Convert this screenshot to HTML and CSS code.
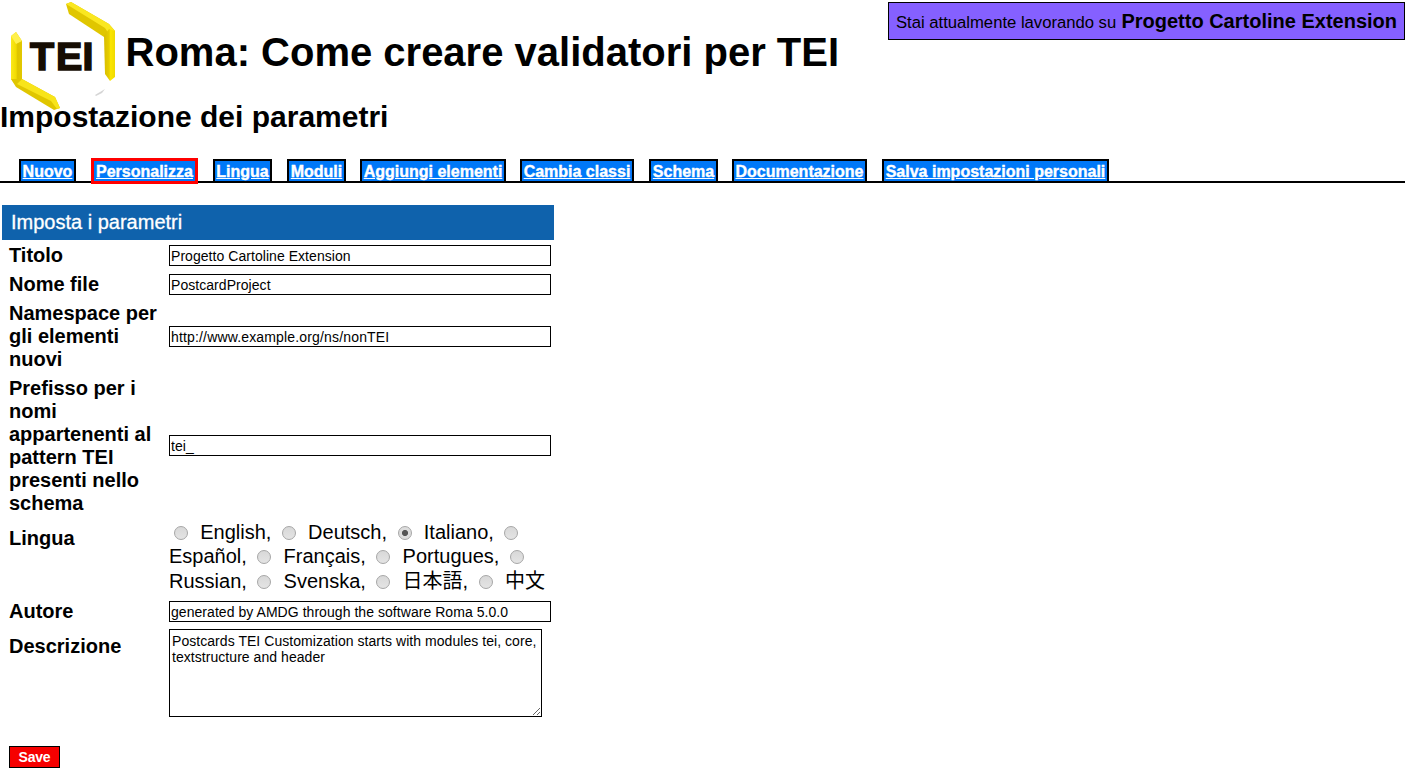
FILE: index.html
```html
<!DOCTYPE html>
<html lang="it">
<head>
<meta charset="utf-8">
<title>Roma: Come creare validatori per TEI</title>
<link rel="stylesheet" href="styles.css">
</head>
<body>
<header class="banner">
  <svg class="logo" width="120" height="112" viewBox="0 0 120 112" aria-label="TEI">
    <defs>
      <linearGradient id="gold" x1="0" x2="1"><stop offset="0" stop-color="#d8bd00"/><stop offset=".45" stop-color="#e6cd00"/><stop offset=".6" stop-color="#fbe600"/><stop offset="1" stop-color="#f0da00"/></linearGradient>
      <linearGradient id="gold-left" x1="0" x2="1"><stop offset="0" stop-color="#fbe81c"/><stop offset=".45" stop-color="#f2dc00"/><stop offset=".6" stop-color="#dec400"/><stop offset="1" stop-color="#e2c800"/></linearGradient>
    </defs>
    <path fill="#e0c600" d="M66 4L71 2L109 24L115 31L104 37L69 14Z"/>
    <path fill="#fae720" d="M66 4L71 2L109 24L115 31L109 34L105 28L71 7Z"/>
    <path fill="url(#gold)" d="M104 36L109 29L115 31L115 77L110 81L105 74Z"/>
    <path fill="url(#gold-left)" d="M11 36L16 32L22 41L22 80L17 87L11 79Z"/>
    <path fill="#fff04d" d="M11 36L16 32L22 41L16 44Z"/>
    <path fill="#e0c600" d="M11 79L22 79L55 97L60 108L54 110L16 87Z"/>
    <path fill="#f8e41a" d="M22 79L55 97L60 108L57 109L51 101L17 84Z"/>
    <path fill="#d5d5d5" d="M95 95L105 89L102 93L96 96Z"/>
    <text class="logo-text" x="30 56 82.5" y="70">TEI</text>
  </svg>
  <h1 class="title">Roma: Come creare validatori per TEI</h1>
  <div class="status"><span class="working">Stai attualmente lavorando su</span><strong class="project">Progetto Cartoline Extension</strong></div>
</header>
<h2 class="subtitle">Impostazione dei parametri</h2>
<nav class="tabs">
  <a class="tab w57" href="#">Nuovo</a>
  <a class="tab active" href="#">Personalizza</a>
  <a class="tab w59" href="#">Lingua</a>
  <a class="tab w59" href="#">Moduli</a>
  <a class="tab w146" href="#">Aggiungi elementi</a>
  <a class="tab w114" href="#">Cambia classi</a>
  <a class="tab w69" href="#">Schema</a>
  <a class="tab w135" href="#">Documentazione</a>
  <a class="tab w227" href="#">Salva impostazioni personali</a>
</nav>
<form class="params">
  <div class="heading">Imposta i parametri</div>
  <div class="row"><label class="name">Titolo</label><input class="field" value="Progetto Cartoline Extension"></div>
  <div class="row"><label class="name">Nome file</label><input class="field" value="PostcardProject"></div>
  <div class="row"><label class="name">Namespace per<br>gli elementi<br>nuovi</label><input class="field url" value="http://www.example.org/ns/nonTEI"></div>
  <div class="row prefix-row"><label class="name">Prefisso per i<br>nomi<br>appartenenti al<br>pattern TEI<br>presenti nello<br>schema</label><input class="field" value="tei_"></div>
  <div class="row top langs-row"><label class="name">Lingua</label>
    <div class="langs">
      <div><i class="radio"></i>English, <i class="radio"></i>Deutsch, <i class="radio on"></i>Italiano, <i class="radio"></i></div>
      <div>Español, <i class="radio"></i>Français, <i class="radio"></i>Portugues, <i class="radio"></i></div>
      <div class="last">Russian, <i class="radio"></i>Svenska, <i class="radio"></i>日本語, <i class="radio"></i>中文</div>
    </div>
  </div>
  <div class="row"><label class="name">Autore</label><input class="field" value="generated by AMDG through the software Roma 5.0.0"></div>
  <div class="row top desc-row"><label class="name">Descrizione</label><textarea class="area">Postcards TEI Customization starts with modules tei, core,
textstructure and header</textarea></div>
  <button class="save" type="button">Save</button>
</form>
</body>
</html>
```
FILE: styles.css
```css
* { box-sizing: border-box; }
body {
  margin: 0;
  background: #fff;
  color: #000;
  font: 20px/23px "Liberation Sans", "Noto Sans CJK JP", sans-serif;
  overflow: hidden;
}
.banner { display: flex; height: 100px; padding-right: 4px; }
.logo { flex: none; width: 120px; height: 112px; }
.logo-text { font: bold 39.5px "Liberation Sans", sans-serif; fill: #160d03; stroke: #160d03; stroke-width: 1.6px; }
.title { margin: 29px 0 0 5.5px; font-size: 40px; line-height: 46px; white-space: nowrap; }
.status {
  display: flex;
  align-items: baseline;
  justify-content: space-between;
  width: 517px;
  height: 38px;
  margin: 2px 0 0 auto;
  padding: 7px 7px 5px;
  border: 1px solid #000;
  background: #8560ff;
  font-size: 16px;
  white-space: nowrap;
}
.working { font-size: 16.7px; letter-spacing: -.02px; }
.project { font-size: 20px; }
.subtitle { position: relative; margin: 0; font-size: 30px; line-height: 34px; }
.tabs {
  display: flex;
  align-items: flex-start;
  gap: 15px;
  width: 1405px;
  height: 26px;
  margin-top: 23px;
  padding: 2px 0 0 19px;
  background: linear-gradient(#000, #000) 0 24px / 100% 2px no-repeat;
}
.tab {
  flex: none;
  height: 24px;
  padding-top: 1px;
  border: 2px solid #000;
  background: #0078f8;
  color: #fff;
  font-size: 16px;
  font-weight: bold;
  line-height: 20px;
  text-align: center;
  text-decoration: underline;
  -webkit-text-stroke: .4px #fff;
  white-space: nowrap;
}
.active { width: 107px; height: 26px; margin-top: -1px; border: 3px solid #f00; }
.w57 { width: 57px; }
.w59 { width: 59px; }
.w146 { width: 146px; margin-left: -1px; }
.w114 { width: 114px; margin-left: -1px; }
.w69 { width: 69px; }
.w135 { width: 135px; margin-left: -1px; }
.w227 { width: 227px; }
.params { width: 552px; margin: 22px 0 0 2px; }
.heading { height: 35px; margin-bottom: 1px; padding: 6px 9px; background: #0f62ac; color: #fff; -webkit-text-stroke: .3px #fff; }
.row { display: flex; align-items: center; padding: 3px 0 3px 7px; }
.prefix-row .field { margin-bottom: 2px; }
.top { align-items: flex-start; }
.name { flex: none; width: 160px; font-weight: bold; }
.field, .area {
  border: 1px solid #000;
  border-radius: 0;
  background: #fff;
  color: #000;
  font: 14px/16px "Liberation Sans", sans-serif;
  letter-spacing: .05px;
  outline: 0;
}
.field { width: 382px; height: 21px; padding: 2px 1px 1px; }
.url { letter-spacing: .16px; }
.langs-row { height: 79px; }
.langs-row .name { padding-top: 6px; }
.langs { line-height: 24px; white-space: nowrap; margin-top: -1px; }
.langs div { height: 24px; }
.langs .last { margin-top: 1px; }
.radio {
  display: inline-block;
  width: 14px;
  height: 14px;
  margin: 0 12.2px 0 5px;
  border: 1px solid #a6a6a6;
  border-radius: 50%;
  background: linear-gradient(#d8d8d8, #e4e4e4);
  vertical-align: -1px;
}
.on { background: radial-gradient(circle, #555 0 2.7px, #ddd 3.4px); }
.desc-row { height: 94px; }
.desc-row .name { padding-top: 6px; }
.area { width: 373px; height: 88px; padding: 3px 2px; overflow: hidden; white-space: pre; resize: both; }
.save {
  display: block;
  width: 51px;
  height: 22px;
  margin: 26px 0 0 7px;
  padding: 0;
  border: 1px solid #000;
  background: #f60000;
  color: #fff;
  font: bold 14px/20px "Liberation Sans", sans-serif;
  letter-spacing: -.2px;
}
```
